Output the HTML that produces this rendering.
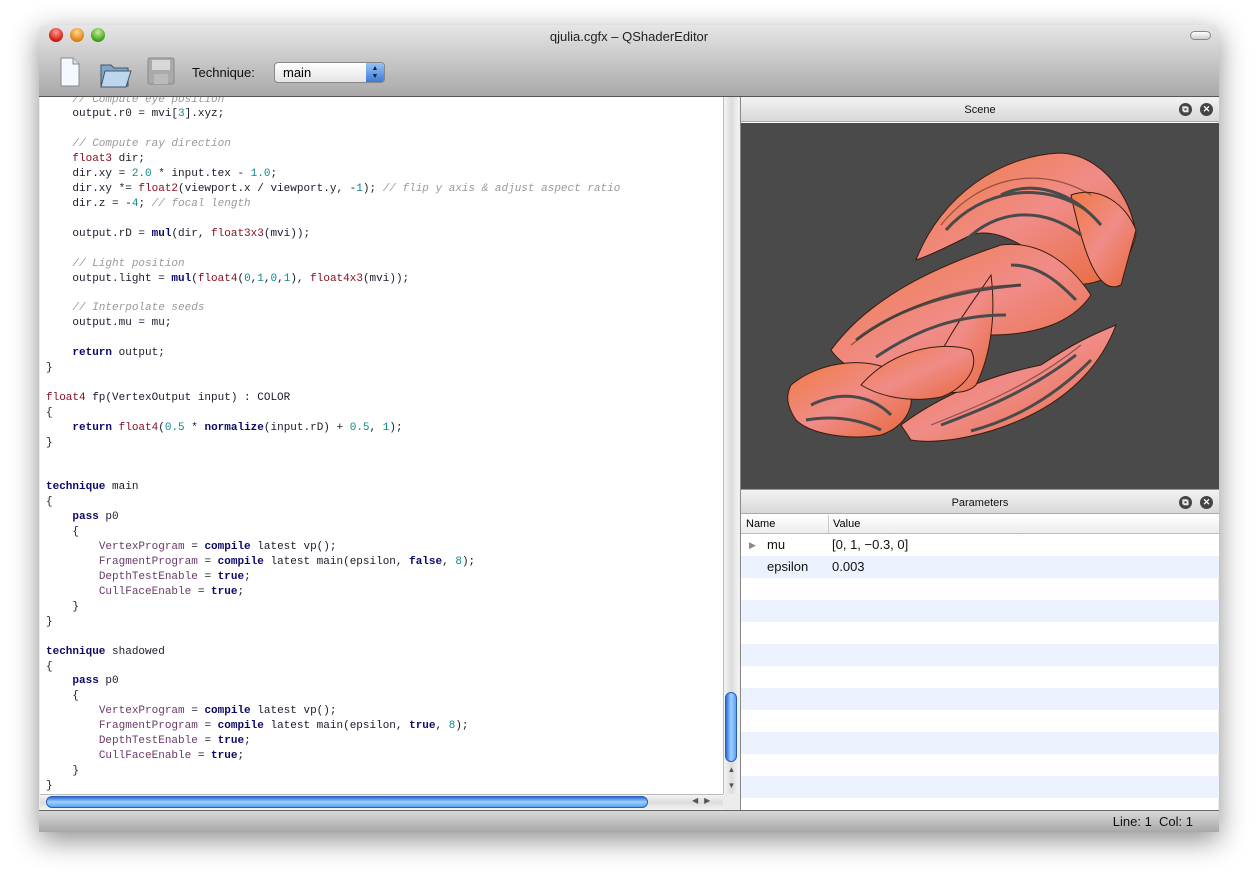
<!DOCTYPE html>
<html><head><meta charset="utf-8"><style>
*{margin:0;padding:0;box-sizing:border-box}
body{width:1258px;height:886px;background:#fff;position:relative;overflow:hidden;font-family:"Liberation Sans",sans-serif}
.win{position:absolute;left:39px;top:25px;width:1180px;height:807px;box-shadow:0 8px 28px rgba(0,0,0,.45);border-radius:5px 5px 0 0;background:#ececec;overflow:hidden}
.tb{position:absolute;left:0;top:0;width:1180px;height:72px;background:linear-gradient(#e6e6e6,#a9a9a9);border-bottom:1px solid #555}
.title{position:absolute;top:4px;width:100%;text-align:center;font-size:13px;color:#222}
.lt{position:absolute;top:3px;width:14px;height:14px;border-radius:50%}
.code{position:absolute;left:1px;top:72px;width:683px;height:697px;background:#fff;overflow:hidden}
pre{position:absolute;left:6px;top:-4.5px;font-family:"Liberation Mono",monospace;font-size:11px;line-height:14.92px;color:#1a1a2a}
.c{color:#999;font-style:italic}.t{color:#8a1020}.n{color:#0a8a8a}.k{color:#0a0a6a;font-weight:bold}.p{color:#6a3a6a}
.vs{position:absolute;left:684px;top:72px;width:16px;height:697px;background:linear-gradient(90deg,#f4f4f4,#dcdcdc,#f4f4f4);border-left:1px solid #bbb}
.hs{position:absolute;left:1px;top:769px;width:683px;height:16px;background:linear-gradient(#f4f4f4,#dcdcdc,#f4f4f4);border-top:1px solid #bbb}
.thumbv{position:absolute;left:686px;top:667px;width:12px;height:70px;border-radius:6px;background:linear-gradient(90deg,#2a6fd8,#9fd0ff,#5aa3f0);border:1px solid #2a5cb8}
.thumbh{position:absolute;left:7px;top:771px;width:602px;height:12px;border-radius:6px;background:linear-gradient(#2a6fd8,#9fd0ff,#5aa3f0);border:1px solid #2a5cb8}
.right{position:absolute;left:701px;top:72px;width:478px;height:713px;background:#fff;border-left:1px solid #888}
.ph{position:absolute;left:0;width:478px;height:25px;background:linear-gradient(#f3f3f3,#d8d8d8);border-bottom:1px solid #aaa;text-align:center;font-size:11px;line-height:26px;color:#111}
.ic{position:absolute;top:6px;width:13px;height:13px;border-radius:50%;background:#444;color:#fff;font-size:9px;line-height:13px;text-align:center;font-weight:bold}
.status{position:absolute;left:0;top:785px;width:1180px;height:22px;background:linear-gradient(#d8d8d8,#a8a8a8);border-top:1px solid #666;font-size:13px;color:#111}
.row{position:absolute;left:0;width:478px;height:22px;font-size:13px;line-height:22px;color:#111}
</style></head><body>
<div class="win">
 <div class="tb">
  <div class="lt" style="left:10px;background:radial-gradient(circle at 50% 30%,#ff9a90,#d01a10 70%,#a00)"></div>
  <div class="lt" style="left:31px;background:radial-gradient(circle at 50% 30%,#ffd890,#e08010 70%,#b06000)"></div>
  <div class="lt" style="left:52px;background:radial-gradient(circle at 50% 30%,#c8f0a0,#40a018 70%,#2a7010)"></div>
  <div class="title">qjulia.cgfx – QShaderEditor</div>
  <div style="position:absolute;right:8px;top:6px;width:21px;height:9px;border-radius:5px;border:1px solid #888;background:linear-gradient(#fff,#ccc)"></div>
  <svg style="position:absolute;left:20px;top:32px" width="22" height="30"><path d="M2 1h12l6 6v22H2z" fill="#f4f8ff" stroke="#889" /><path d="M14 1v6h6" fill="#dde" stroke="#889"/></svg>
  <svg style="position:absolute;left:60px;top:32px" width="34" height="32"><path d="M2 8h10l3 3h14v18H2z" fill="#7fa6c9" stroke="#456"/><path d="M6 14h26l-5 16H2z" fill="#bcd6ee" stroke="#456"/></svg>
  <svg style="position:absolute;left:108px;top:32px" width="28" height="28"><rect x="1" y="1" width="26" height="26" rx="2" fill="#aaa" stroke="#888"/><rect x="5" y="3" width="18" height="10" fill="#d8d8d8"/><rect x="7" y="17" width="14" height="10" fill="#bbb"/></svg>
  <div style="position:absolute;left:153px;top:40px;font-size:13px;color:#111">Technique:</div>
  <div style="position:absolute;left:235px;top:37px;width:111px;height:21px;border-radius:4px;border:1px solid #888;background:linear-gradient(#fff,#e4e4e4);font-size:13px;line-height:19px;padding-left:8px">main
   <div style="position:absolute;right:0;top:0;width:18px;height:19px;border-radius:0 3px 3px 0;background:linear-gradient(#9cc4f5,#3a7ad8);color:#123;font-size:7px;line-height:8px;text-align:center;padding-top:2px">▲<br>▼</div></div>
 </div>
 <div class="code"><pre><span class="c">    // Compute eye position</span>
    output.r0 = mvi[<span class="n">3</span>].xyz;

<span class="c">    // Compute ray direction</span>
    <span class="t">float3</span> dir;
    dir.xy = <span class="n">2.0</span> * input.tex - <span class="n">1.0</span>;
    dir.xy *= <span class="t">float2</span>(viewport.x / viewport.y, -<span class="n">1</span>); <span class="c">// flip y axis &amp; adjust aspect ratio</span>
    dir.z = -<span class="n">4</span>; <span class="c">// focal length</span>

    output.rD = <span class="k">mul</span>(dir, <span class="t">float3x3</span>(mvi));

<span class="c">    // Light position</span>
    output.light = <span class="k">mul</span>(<span class="t">float4</span>(<span class="n">0</span>,<span class="n">1</span>,<span class="n">0</span>,<span class="n">1</span>), <span class="t">float4x3</span>(mvi));

<span class="c">    // Interpolate seeds</span>
    output.mu = mu;

    <span class="k">return</span> output;
}

<span class="t">float4</span> fp(VertexOutput input) : COLOR
{
    <span class="k">return</span> <span class="t">float4</span>(<span class="n">0.5</span> * <span class="k">normalize</span>(input.rD) + <span class="n">0.5</span>, <span class="n">1</span>);
}


<span class="k">technique</span> main
{
    <span class="k">pass</span> p0
    {
        <span class="p">VertexProgram</span> = <span class="k">compile</span> latest vp();
        <span class="p">FragmentProgram</span> = <span class="k">compile</span> latest main(epsilon, <span class="k">false</span>, <span class="n">8</span>);
        <span class="p">DepthTestEnable</span> = <span class="k">true</span>;
        <span class="p">CullFaceEnable</span> = <span class="k">true</span>;
    }
}

<span class="k">technique</span> shadowed
{
    <span class="k">pass</span> p0
    {
        <span class="p">VertexProgram</span> = <span class="k">compile</span> latest vp();
        <span class="p">FragmentProgram</span> = <span class="k">compile</span> latest main(epsilon, <span class="k">true</span>, <span class="n">8</span>);
        <span class="p">DepthTestEnable</span> = <span class="k">true</span>;
        <span class="p">CullFaceEnable</span> = <span class="k">true</span>;
    }
}</pre></div>
 <div class="vs"><div style="position:absolute;top:665px;width:15px;text-align:center;font-size:8px;color:#555;line-height:16px">▲<br>▼</div></div>
 <div class="thumbv"></div>
 <div class="hs"><div style="position:absolute;left:652px;top:1px;font-size:8px;color:#555;letter-spacing:6px">◀▶</div></div>
 <div class="thumbh"></div>
 <div class="right">
  <div class="ph" style="top:0">Scene<div class="ic" style="right:27px">⧉</div><div class="ic" style="right:6px">✕</div></div>
  <div style="position:absolute;left:0;top:26px;width:478px;height:366px;background:#4a4a4a"></div>
  <svg style="position:absolute;left:0;top:38px" width="478" height="354">
   <defs><linearGradient id="g" x1="0" y1="0" x2="1" y2="1"><stop offset="0" stop-color="#f07a40"/><stop offset=".5" stop-color="#f08c88"/><stop offset="1" stop-color="#e8683a"/></linearGradient></defs>
   <g fill="url(#g)" stroke="#3a1a10" stroke-width="1">
    <path d="M175 125 C200 60 260 20 320 18 C360 20 390 60 395 100 C385 140 360 150 330 150 C300 120 260 90 230 100 C210 110 190 120 175 125Z"/>
    <path d="M330 60 C360 50 385 70 395 95 L380 150 C360 160 345 130 330 60Z"/>
    <path d="M90 215 C130 160 200 130 260 110 C300 105 330 130 350 160 C330 190 290 200 250 200 C210 210 180 230 150 250 C120 240 100 230 90 215Z"/>
    <path d="M50 250 C80 225 130 220 160 240 C180 260 170 290 140 300 C110 305 70 300 55 285 C45 270 45 260 50 250Z"/>
    <path d="M160 290 C200 260 250 240 300 230 C330 210 350 200 375 190 C360 230 330 260 290 280 C250 300 200 310 170 305Z"/>
    <path d="M185 250 C205 200 230 170 250 140 C255 180 250 220 235 250 C225 260 200 260 185 250Z"/>
    <path d="M120 250 C150 215 200 205 230 215 C240 235 220 255 200 262 C170 268 140 262 120 250Z"/>
   </g>
   <g fill="none" stroke="#4a4a4a" stroke-width="3">
    <path d="M205 95 C240 55 300 45 345 75"/><path d="M225 105 C255 75 300 70 340 100"/><path d="M260 60 C290 45 330 55 360 90"/>
    <path d="M115 205 C160 170 220 155 280 150"/><path d="M135 222 C175 195 215 180 265 180"/><path d="M270 130 C300 130 320 150 335 165"/>
    <path d="M70 270 C100 255 130 260 150 280"/><path d="M65 285 C95 280 120 285 140 295"/>
    <path d="M200 290 C240 275 290 255 335 220"/><path d="M230 296 C270 285 310 265 350 225"/>
   </g>
   <g fill="none" stroke="#5a2a18" stroke-width="1.2" opacity=".6">
    <path d="M200 90 C240 40 300 30 350 60"/><path d="M110 210 C160 170 220 150 280 150"/><path d="M190 290 C240 270 290 250 340 210"/>
   </g>
  </svg>
  <div class="ph" style="top:392px;border-top:1px solid #999">Parameters<div class="ic" style="right:27px">⧉</div><div class="ic" style="right:6px">✕</div></div>
  <div style="position:absolute;left:0;top:418px;width:478px;height:19px;background:linear-gradient(#fff,#ececec);border-bottom:1px solid #bbb;font-size:11px;line-height:18px"><span style="position:absolute;left:5px">Name</span><span style="position:absolute;left:87px;border-left:1px solid #ccc;padding-left:4px;height:18px">Value</span></div>
  <div class="row" style="top:437px;background:#fff"><span style="position:absolute;left:8px;color:#888;font-size:9px">▶</span><span style="position:absolute;left:26px">mu</span><span style="position:absolute;left:91px">[0, 1, −0.3, 0]</span></div>
  <div class="row" style="top:459px;background:#edf3fe"><span style="position:absolute;left:26px">epsilon</span><span style="position:absolute;left:91px">0.003</span></div>
  <div class="row" style="top:503px;background:#edf3fe"></div>
  <div class="row" style="top:547px;background:#edf3fe"></div>
  <div class="row" style="top:591px;background:#edf3fe"></div>
  <div class="row" style="top:635px;background:#edf3fe"></div>
  <div class="row" style="top:679px;background:#edf3fe"></div>
 </div>
 <div class="status"><span style="position:absolute;right:26px;top:3px">Line: 1 &nbsp;Col: 1</span></div>
</div>
</body></html>
